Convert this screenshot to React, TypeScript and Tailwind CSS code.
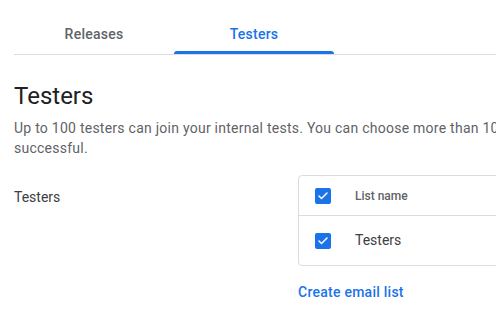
import { Check } from "lucide-react";

function Checkbox() {
  return (
    <span className="flex h-4 w-4 items-center justify-center rounded-[2px] bg-[#1a73e8]">
      <Check size={12} strokeWidth={3} className="text-white" />
    </span>
  );
}

export default function App() {
  return (
    <div className="h-screen w-screen overflow-hidden bg-white font-['Roboto',sans-serif]">
      <div className="w-[900px]">
        {/* Tabs */}
        <div className="ml-[14px] flex h-[55px] border-b border-[#dadce0] pt-[24px]">
          <div className="flex w-40 justify-center text-[14px] font-medium tracking-[0.25px] text-[#5f6368]">Releases</div>
          <div className="relative flex w-40 justify-center text-[14px] font-medium tracking-[0.25px] text-[#1a73e8]">
            Testers
            <span className="absolute bottom-0 left-0 right-0 h-[3px] rounded-t-[3px] bg-[#1a73e8]" />
          </div>
        </div>

        <div className="px-[14px] pt-[26px]">
          <h1 className="text-[24px] leading-[30px] text-[#202124]">Testers</h1>
          <p className="mt-[7px] w-[760px] text-[14px] leading-[20px] tracking-[0.25px] text-[#5f6368]">
            Up to 100 testers can join your internal tests. You can choose more than 100 testers, but only the first 100 will be successful.
          </p>

          {/* Testers list */}
          <div className="mt-[17px] flex">
            <div className="w-[284px] shrink-0 pt-[12px] text-[14px] text-[#3c4043]">Testers</div>
            <div className="flex flex-col">
              <div className="w-[520px] rounded-[4px] border border-[#dadce0]">
                <div className="flex h-[40px] items-center border-b border-[#dadce0]">
                  <div className="pl-[16px]"><Checkbox /></div>
                  <span className="ml-[24px] text-[12px] font-medium text-[#5f6368]">List name</span>
                </div>
                <div className="flex h-[49px] items-center">
                  <div className="pl-[16px]"><Checkbox /></div>
                  <span className="ml-[24px] text-[14px] text-[#3c4043]">Testers</span>
                </div>
              </div>
              <div className="mt-[16px] text-[14px] font-medium tracking-[0.25px] text-[#1a73e8]">Create email list</div>
            </div>
          </div>
        </div>
      </div>
    </div>
  );
}
